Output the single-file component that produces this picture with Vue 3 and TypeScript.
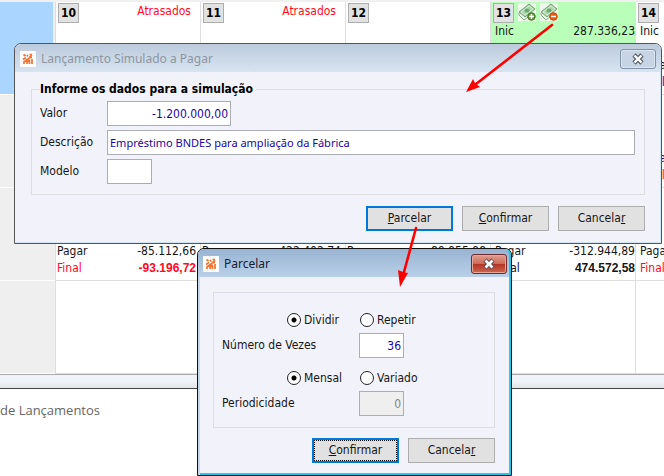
<script setup lang="ts">
import { ref } from 'vue'

interface Line {
  label: string
  value: string
  tone?: string
  strong?: boolean
}

interface Day {
  day?: string
  late?: boolean
  today?: boolean
  lines?: Line[]
}

const weeks: Day[][] = [
  [
    { day: '10', late: true },
    { day: '11', late: true },
    { day: '12' },
    { day: '13', today: true, lines: [{ label: 'Inic', value: '287.336,23' }] },
    {
      day: '14',
      lines: [
        { label: 'Inic', value: '' },
        { label: '', value: '' },
        { label: 'Pagar', value: '' },
        { label: 'Final', value: '', tone: 'blue' },
      ],
    },
  ],
  [
    {},
    {},
    {},
    {},
    {
      lines: [
        { label: '', value: '' },
        { label: '', value: '' },
        { label: 'Pagar', value: '', tone: 'blue' },
        { label: 'Final', value: '', tone: 'red' },
      ],
    },
  ],
  [
    {
      lines: [
        { label: '', value: '' },
        { label: '', value: '' },
        { label: 'Pagar', value: '-85.112,66' },
        { label: 'Final', value: '-93.196,72', tone: 'red', strong: true },
      ],
    },
    {
      lines: [
        { label: '', value: '' },
        { label: '', value: '' },
        { label: 'Pagar', value: '-422.402,74' },
      ],
    },
    {
      lines: [
        { label: '', value: '' },
        { label: '', value: '' },
        { label: 'Pagar', value: '-89.955,98' },
      ],
    },
    {
      lines: [
        { label: '', value: '' },
        { label: '', value: '' },
        { label: 'Pagar', value: '-312.944,89' },
        { label: 'Final', value: '474.572,58', strong: true },
      ],
    },
    {
      lines: [
        { label: '', value: '' },
        { label: '', value: '' },
        { label: 'Pagar', value: '' },
        { label: 'Final', value: '', tone: 'red' },
      ],
    },
  ],
  [{}, {}, {}, {}, {}],
]

const valor = ref('-1.200.000,00')
const descricao = ref('Empréstimo BNDES para ampliação da Fábrica')
const modelo = ref('')
const modo = ref('dividir')
const vezes = ref('36')
const intervalo = ref('mensal')
const periodicidade = ref('0')
</script>

<template>
  <main class="desktop">
    <section class="calendar">
      <div v-for="(week, w) in weeks" :key="w" class="week">
        <div class="side" :class="{ current: w === 0 }"></div>
        <div v-for="(cell, d) in week" :key="d" class="cell" :class="{ today: cell.today }">
          <div class="cell-head">
            <span v-if="cell.day" class="day">{{ cell.day }}</span>
            <template v-if="cell.today">
              <button
                v-for="kind in ['plus', 'minus']"
                :key="kind"
                type="button"
                class="money"
                :aria-label="kind === 'plus' ? 'Simular receber' : 'Simular pagar'"
              >
                <svg width="18" height="18" viewBox="0 0 18 18" aria-hidden="true">
                  <path d="M1 9 11 1 17 6 7 14Z" fill="#a9d3a9" stroke="#70a574" />
                  <path d="M1 10v2l5 5 9-7" fill="none" stroke="#7eaf80" />
                  <path d="M3 9 11 3 15 6 7 12Z" fill="none" stroke="#d6edd5" />
                  <ellipse cx="9" cy="7.500" rx="2.500" ry="2" fill="#6ea974" />
                  <circle
                    cx="13.500"
                    cy="13.500"
                    r="3.800"
                    :fill="kind === 'plus' ? '#62963c' : '#ed5a13'"
                    :stroke="kind === 'plus' ? '#477726' : '#c8490e'"
                  />
                  <path
                    :d="kind === 'plus' ? 'M11 13.500h5M13.500 11v5' : 'M11 13.500h5'"
                    stroke="#fff"
                    stroke-width="1.500"
                  />
                </svg>
              </button>
            </template>
            <span v-if="cell.late" class="late">Atrasados</span>
          </div>
          <div v-for="(line, i) in cell.lines" :key="i" class="line" :class="line.tone">
            <span>{{ line.label }}</span>
            <span :class="{ strong: line.strong }">{{ line.value }}</span>
          </div>
        </div>
      </div>
    </section>
    <div class="splitter"></div>
    <section class="entries">de Lançamentos</section>

    <section class="window simulate" aria-label="Lançamento Simulado a Pagar">
      <header class="titlebar">
        <svg class="logo" width="16" height="16" viewBox="0 0 16 16" aria-hidden="true">
          <rect width="16" height="16" rx="1" fill="#fff" />
          <g fill="none" stroke="#f4722b" stroke-width="1.700">
            <path d="M4 13v-2l4-3 4-4M7 13v-2l3-2M9.500 13v-3M12 13V8M3 8.500l3-2M3.500 3.500l2 1.500M7 4l1 1.500M9.500 3.500h2.500M10 7l2-1" />
          </g>
        </svg>
        <h2>Lançamento Simulado a Pagar</h2>
        <button type="button" class="close" aria-label="Fechar">
          <svg width="14" height="12" viewBox="0 0 14 12" aria-hidden="true">
            <path d="M3 2 11 10M11 2 3 10" stroke="#59616b" stroke-width="4.600" />
            <path d="M3.500 2.500 10.500 9.500M10.500 2.500 3.500 9.500" stroke="#fff" stroke-width="2.400" />
          </svg>
        </button>
      </header>
      <form class="body" @submit.prevent>
        <fieldset class="group">
          <legend>Informe os dados para a simulação</legend>
          <label for="valor">Valor</label>
          <input id="valor" v-model="valor" class="money-field" type="text" />
          <label for="descricao">Descrição</label>
          <input id="descricao" v-model="descricao" class="long-field" type="text" />
          <label for="modelo">Modelo</label>
          <input id="modelo" v-model="modelo" class="short-field" type="text" />
        </fieldset>
        <div class="actions">
          <button type="button" class="btn default"><u>P</u>arcelar</button>
          <button type="submit" class="btn"><u>C</u>onfirmar</button>
          <button type="button" class="btn">Cancela<u>r</u></button>
        </div>
      </form>
    </section>

    <section class="window split" aria-label="Parcelar">
      <header class="titlebar">
        <svg class="logo" width="16" height="16" viewBox="0 0 16 16" aria-hidden="true">
          <rect width="16" height="16" rx="1" fill="#fff" />
          <g fill="none" stroke="#f4722b" stroke-width="1.700">
            <path d="M4 13v-2l4-3 4-4M7 13v-2l3-2M9.500 13v-3M12 13V8M3 8.500l3-2M3.500 3.500l2 1.500M7 4l1 1.500M9.500 3.500h2.500M10 7l2-1" />
          </g>
        </svg>
        <h2>Parcelar</h2>
        <button type="button" class="close" aria-label="Fechar">
          <svg width="14" height="12" viewBox="0 0 14 12" aria-hidden="true">
            <path d="M3 2 11 10M11 2 3 10" stroke="#6b4a55" stroke-width="4.600" />
            <path d="M3.500 2.500 10.500 9.500M10.500 2.500 3.500 9.500" stroke="#fff" stroke-width="2.600" />
          </svg>
        </button>
      </header>
      <form class="body" @submit.prevent>
        <div class="options">
          <div class="radios">
            <label><input v-model="modo" type="radio" name="modo" value="dividir" />Dividir</label>
            <label><input v-model="modo" type="radio" name="modo" value="repetir" />Repetir</label>
          </div>
          <div class="field">
            <label for="vezes">Número de Vezes</label>
            <input id="vezes" v-model="vezes" type="text" />
          </div>
          <div class="radios second">
            <label><input v-model="intervalo" type="radio" name="intervalo" value="mensal" />Mensal</label>
            <label><input v-model="intervalo" type="radio" name="intervalo" value="variado" />Variado</label>
          </div>
          <div class="field">
            <label for="periodicidade">Periodicidade</label>
            <input id="periodicidade" v-model="periodicidade" type="text" disabled />
          </div>
        </div>
        <div class="actions">
          <button type="submit" class="btn default focused"><span><u>C</u>onfirmar</span></button>
          <button type="button" class="btn">Cancela<u>r</u></button>
        </div>
      </form>
    </section>

    <svg class="arrows" width="664" height="300" viewBox="0 0 664 300" aria-hidden="true">
      <g stroke="#f00" stroke-width="2.600" stroke-linecap="round">
        <path d="M552 25 476 84" />
        <path d="M416 228 404 272" />
      </g>
      <path d="M466 92 473 79 475 83 480 87Z" fill="#f00" />
      <path d="M400 287 398 270 403 272 408 273Z" fill="#f00" />
    </svg>
  </main>
</template>

<style>
body {
  margin: 0;
}
</style>

<style scoped>
* {
  box-sizing: border-box;
}

.desktop {
  position: relative;
  display: flex;
  flex-direction: column;
  min-height: 100vh;
  overflow: hidden;
  background: #fff;
  color: #161616;
  font: 12px/17px 'DejaVu Sans Condensed', 'DejaVu Sans', sans-serif;
}

button,
input {
  font: inherit;
  color: inherit;
}

.calendar {
  border-top: 2px solid #f0f0f0;
}

.week {
  display: grid;
  grid-template-columns: 55px repeat(5, 145px);
  height: 93px;
}

.side {
  background: #efefef;
  border-bottom: 1px solid #fff;
}

.side.current {
  background: #aad5ff;
  border-right: 2px solid #f0f0f0;
}

.cell {
  padding-top: 1px;
  border-left: 1px solid #dedede;
  border-bottom: 1px solid #dedede;
}

.today {
  background: #b9ffb9;
}

.cell-head {
  display: flex;
  align-items: flex-start;
  gap: 4px;
  height: 20px;
  padding: 0 9px 0 2px;
}

.day {
  width: 21px;
  height: 20px;
  border: 1px solid #adadad;
  background: #e2e2e2;
  color: #000;
  font-weight: bold;
  line-height: 18px;
  text-align: center;
}

.money {
  width: 18px;
  height: 18px;
  padding: 0;
  border: 0;
  background: #f0f8ec;
}

.money svg {
  display: block;
}

.late {
  margin-left: auto;
  color: #ff0a1e;
}

.line {
  display: flex;
  justify-content: space-between;
  height: 17px;
  padding: 0 4px 0 1px;
}

.cell:nth-child(5) .line {
  padding: 0 0 0 4px;
}

.cell:nth-child(6) .line {
  padding-left: 4px;
}

.red {
  color: #ff0a1e;
}

.blue {
  color: #1515a5;
}

.strong {
  font-weight: bold;
  font-family: 'Liberation Sans', sans-serif;
}

.splitter {
  height: 15px;
  border-top: 1px solid #aaa;
  border-bottom: 1px solid #444;
  background: linear-gradient(#f0f2fa 50%, #ececec 70%, #dbe7f2);
}

.entries {
  flex: 1;
  padding: 10px 0;
  color: #666;
  font: 13px/22px 'Open Sans', sans-serif;
}

.window {
  position: absolute;
  display: flex;
  flex-direction: column;
  border: 1px solid #555;
  border-radius: 7px 7px 0 0;
  background: #f2f3fa;
}

.simulate {
  top: 43px;
  left: 14px;
  right: 2px;
  box-shadow: inset -1px -1px #d6e5f3;
}

.split {
  top: 248px;
  left: 197px;
  width: 315px;
  border-color: #111;
  box-shadow: inset 2px 0 #c8d8e8, inset -2px -2px #22c8e8;
}

.titlebar {
  display: flex;
  align-items: center;
  gap: 5px;
  height: 28px;
  padding: 2px 5px 0;
  border-radius: 6px 6px 0 0;
  background: linear-gradient(#bccbdc, #d7e4f1);
}

.split .titlebar {
  padding-right: 2px;
  border-right: 2px solid #22c8e8;
  background: linear-gradient(#98b4d2, #bad0e8);
}

h2 {
  flex: 1;
  margin: 0;
  color: #8d96a1;
  font: 12px/20px 'Noto Sans', sans-serif;
}

.split h2 {
  color: #16202c;
}

.close {
  display: grid;
  place-items: center;
  width: 36px;
  height: 20px;
  padding: 0;
  border: 1px solid #8292a7;
  border-radius: 3px;
  background: #c6d4e3;
  box-shadow: inset 0 0 0 1px #dce6f0;
}

.split .close {
  border-color: #71292b;
  background: linear-gradient(#e2a090, #cb6b5a 48%, #b23322 50%, #cf6850);
  box-shadow: inset 0 0 0 1px #e6a899;
}

.body {
  padding: 9px 16px 12px;
}

.group {
  display: grid;
  grid-template-columns: 67px 1fr;
  align-items: center;
  row-gap: 4px;
  min-width: 0;
  margin: 0 0 11px;
  padding: 3px 9px 10px 8px;
  border: 1px solid #dcdde0;
}

legend {
  padding: 0 3px 0 0;
  color: #000;
  font-weight: bold;
}

input[type='text'] {
  width: 100%;
  height: 25px;
  padding: 0 2px;
  border: 1px solid #abadb3;
  border-radius: 0;
  background: #fff;
  color: #1a06a5;
}

input.money-field {
  width: 124px;
  text-align: right;
}

input.long-field {
  font: 11px/17px 'Noto Sans', sans-serif;
}

input.short-field {
  width: 45px;
}

.actions {
  display: flex;
  justify-content: flex-end;
  gap: 9px;
}

.btn {
  width: 87px;
  height: 25px;
  padding: 0;
  border: 1px solid #adadad;
  background: #e1e1e1;
}

.default {
  border: 2px solid #0078d7;
}

.focused span {
  display: block;
  height: 21px;
  border: 1px dotted #000;
  line-height: 19px;
}

.split .body {
  padding: 15px 16px 12px 15px;
}

.options {
  display: flex;
  flex-direction: column;
  margin-bottom: 10px;
  padding: 14px 8px 11px;
  border: 1px solid #dcdde0;
}

.radios {
  display: grid;
  grid-template-columns: 73px 73px;
  height: 26px;
  padding-left: 65px;
}

.radios.second {
  margin-top: 7px;
}

.radios label {
  display: flex;
  align-items: center;
  gap: 3px;
}

input[type='radio'] {
  flex: none;
  appearance: none;
  width: 14px;
  height: 14px;
  margin: 0;
  border: 1px solid #222;
  border-radius: 50%;
  background: #fff;
}

input[type='radio']:checked {
  background: radial-gradient(#000 2px, #fff 3px);
}

.field {
  display: grid;
  grid-template-columns: 137px 45px;
  align-items: center;
}

.split .field input {
  text-align: right;
}

.field input:disabled {
  background: #efefef;
  color: #858585;
}

.arrows {
  position: absolute;
  top: 0;
  left: 0;
  pointer-events: none;
}
</style>
